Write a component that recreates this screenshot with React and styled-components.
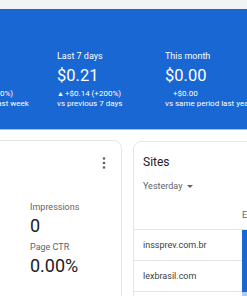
import React from "react";
import styled, { createGlobalStyle } from "styled-components";

const GlobalStyle = createGlobalStyle`
  body {
    margin: 0;
    background: #ffffff;
    font-family: Roboto, "Liberation Sans", Arial, sans-serif;
    overflow: hidden;
  }
`;

const Page = styled.div`
  width: 247px;
  height: 296px;
  overflow: hidden;
`;

const TopStrip = styled.div`
  height: 9px;
  background: #f1f3f4;
`;

const Banner = styled.div`
  height: 121px;
  background: #1967d2;
  border-bottom: 1px solid #9fbdec;
  box-sizing: border-box;
  padding-top: 41px;
  overflow: hidden;
`;

const Periods = styled.div`
  display: flex;
  margin-left: -51px;
`;

const Period = styled.div`
  flex: 0 0 108px;
  color: #ffffff;
  white-space: nowrap;
`;

const PeriodLabel = styled.div`
  font-size: 9px;
  line-height: 12px;
  margin-bottom: 4px;
`;

const PeriodValue = styled.div`
  font-size: 16.5px;
  line-height: 20px;
  margin-bottom: 3px;
`;

const Change = styled.div`
  font-size: 8px;
  line-height: 10px;
  display: flex;
  align-items: center;
`;

const Arrow = styled.span`
  display: inline-block;
  width: 8px;
  font-size: 7px;
  visibility: ${({ $flat }) => ($flat ? "hidden" : "visible")};
`;

const Compare = styled.div`
  font-size: 8px;
  line-height: 10px;
`;

const Cards = styled.div`
  display: grid;
  grid-template-columns: 200px 300px;
  gap: 11px;
  margin-left: -78px;
  margin-top: 10px;
  align-items: start;
`;

const Card = styled.div`
  background: #ffffff;
  border: 1px solid #e3e5e8;
  border-radius: 8px;
  height: 200px;
  box-sizing: border-box;
`;

const CardTop = styled.div`
  display: flex;
  justify-content: flex-end;
  padding: 15px 10px 0 16px;
`;

const Kebab = styled.svg`
  width: 14px;
  height: 14px;
  fill: #5f6368;
`;

const MetricGrid = styled.div`
  display: grid;
  grid-template-columns: 91px 91px;
  padding: 31px 0 0 16px;
`;

const MetricCol = styled.div`
  display: flex;
  flex-direction: column;
  gap: 4px;
`;

const Metric = styled.div``;

const MetricLabel = styled.div`
  font-size: 9px;
  line-height: 12px;
  color: #5f6368;
  margin-bottom: 2px;
`;

const MetricValue = styled.div`
  font-size: 18px;
  line-height: 22px;
  color: #202124;
`;

const SitesCard = styled(Card)`
  margin-top: 1px;
`;

const SitesHead = styled.div`
  padding: 12px 0 0 9px;
`;

const SitesTitle = styled.div`
  font-size: 12px;
  line-height: 16px;
  color: #202124;
`;

const RangePicker = styled.div`
  margin-top: 10px;
  display: flex;
  align-items: center;
  gap: 5px;
  font-size: 9px;
  line-height: 12px;
  color: #5f6368;
`;

const Caret = styled.span`
  width: 0;
  height: 0;
  border-left: 3px solid transparent;
  border-right: 3px solid transparent;
  border-top: 3px solid #5f6368;
`;

const TableHead = styled.div`
  display: grid;
  grid-template-columns: 108px 1fr;
  height: 38px;
  align-items: end;
  padding-bottom: 8px;
  box-sizing: border-box;
  border-bottom: 1px solid #e3e5e8;
  font-size: 9px;
  line-height: 12px;
  color: #5f6368;
  white-space: nowrap;
`;

const Row = styled.div`
  display: grid;
  grid-template-columns: 108px 1fr;
`;

const SiteCell = styled.div`
  height: 30px;
  line-height: 30px;
  padding-left: 9px;
  font-size: 9px;
  color: #3c4043;
  border-bottom: 1px solid #e3e5e8;
  white-space: nowrap;
`;

const BarCell = styled.div`
  background: ${({ $tone }) => $tone};
  width: ${({ $w }) => $w}px;
`;

const periods = [
  { label: "Yesterday", value: "$0.07", change: "+$0.07 (+100%)", compare: "vs same day last week" },
  { label: "Last 7 days", value: "$0.21", change: "+$0.14 (+200%)", compare: "vs previous 7 days" },
  { label: "This month", value: "$0.00", change: "+$0.00", compare: "vs same period last year", flat: true },
];

const sites = [
  { name: "inssprev.com.br", tone: "#1967d2", w: 120 },
  { name: "lexbrasil.com", tone: "#1967d2", w: 120 },
  { name: "direitoprev.com", tone: "#aecbfa", w: 40 },
];

const App = () => {
  return (
    <Page>
      <GlobalStyle />
      <TopStrip />
      <Banner>
        <Periods>
          {periods.map((p) => (
            <Period key={p.label}>
              <PeriodLabel>{p.label}</PeriodLabel>
              <PeriodValue>{p.value}</PeriodValue>
              <Change>
                <Arrow $flat={p.flat}>▲</Arrow>
                {p.change}
              </Change>
              <Compare>{p.compare}</Compare>
            </Period>
          ))}
        </Periods>
      </Banner>
      <Cards>
        <Card>
          <CardTop>
            <Kebab viewBox="0 0 14 14">
              <circle cx="7" cy="2.5" r="1.3" />
              <circle cx="7" cy="7" r="1.3" />
              <circle cx="7" cy="11.5" r="1.3" />
            </Kebab>
          </CardTop>
          <MetricGrid>
            <MetricCol>
              <Metric>
                <MetricLabel>Page views</MetricLabel>
                <MetricValue>0</MetricValue>
              </Metric>
              <Metric>
                <MetricLabel>Page RPM</MetricLabel>
                <MetricValue>$0.00</MetricValue>
              </Metric>
            </MetricCol>
            <MetricCol>
              <Metric>
                <MetricLabel>Impressions</MetricLabel>
                <MetricValue>0</MetricValue>
              </Metric>
              <Metric>
                <MetricLabel>Page CTR</MetricLabel>
                <MetricValue>0.00%</MetricValue>
              </Metric>
            </MetricCol>
          </MetricGrid>
        </Card>
        <SitesCard>
          <SitesHead>
            <SitesTitle>Sites</SitesTitle>
            <RangePicker>
              Yesterday <Caret />
            </RangePicker>
          </SitesHead>
          <TableHead>
            <span />
            <span>Earnings</span>
          </TableHead>
          {sites.map((s) => (
            <Row key={s.name}>
              <SiteCell>{s.name}</SiteCell>
              <BarCell $tone={s.tone} $w={s.w} />
            </Row>
          ))}
        </SitesCard>
      </Cards>
    </Page>
  );
};

export default App;
